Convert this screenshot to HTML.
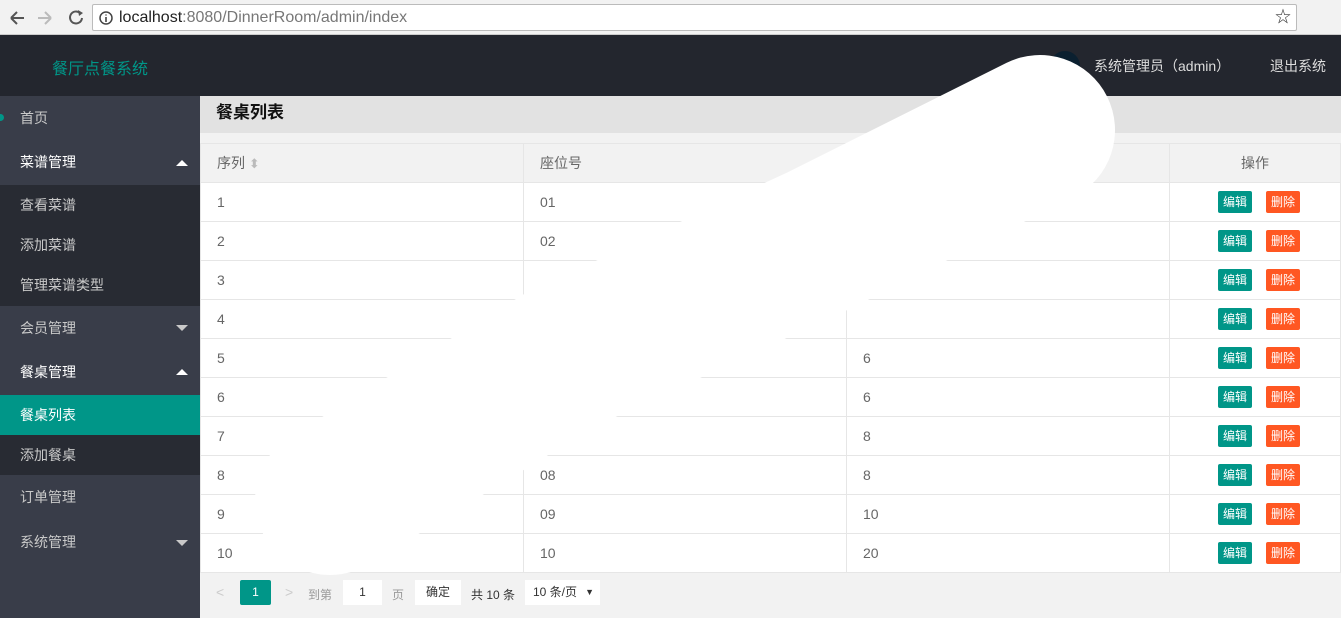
<!DOCTYPE html>
<html><head><meta charset="utf-8"><style>
*{margin:0;padding:0;box-sizing:border-box}
body{width:1341px;height:618px;overflow:hidden;font-family:"Liberation Sans","Noto Sans CJK SC",sans-serif;font-size:14px;background:#f2f2f2;position:relative}
.chrome{position:absolute;left:0;top:0;width:1341px;height:35px;background:#f2f2f2;border-bottom:1px solid #ccc}
.addr{position:absolute;left:92px;top:4px;width:1205px;height:27px;background:#fff;border:1px solid #bbb;border-radius:2px;font-size:16px;line-height:25px;padding-left:26px;color:#222}
.addr span{color:#777}
.hdr{position:absolute;left:0;top:35px;width:1341px;height:61px;background:#23262e}
.side{position:absolute;left:0;top:96px;width:200px;height:522px;background:#393d49}
.it{position:absolute;left:0;width:200px;color:#c9c9c9;padding-left:20px}
.main{position:absolute;left:200px;top:96px;width:1141px;height:522px;background:#f2f2f2}
table{border-collapse:collapse;position:absolute;left:0;top:47px;width:1141px;font-size:14px;color:#666}
td{height:39px;border:1px solid #e6e6e6;padding-left:16px;background:#fff}
th{height:39px;border:1px solid #e6e6e6;padding-left:16px;font-weight:normal;text-align:left;background:#f2f2f2;color:#666}
td.op{text-align:center;padding:0 0 0 8px}
.b{display:inline-block;width:34px;height:22px;line-height:22px;color:#fff;font-size:12px;text-align:center;margin:0 7px;border-radius:2px}
.tri{position:absolute;right:12px;width:0;height:0;border-left:6px solid transparent;border-right:6px solid transparent}
</style></head><body>
<div class="chrome">
<svg style="position:absolute;left:8px;top:8px" width="80" height="20"><path d="M3 10h13M3 10l6-6M3 10l6 6" stroke="#555" stroke-width="2" fill="none"/><path d="M30 10h13M43 10l-6-6M43 10l-6 6" stroke="#bbb" stroke-width="2" fill="none"/><path d="M72 5a6 6 0 1 0 2 5" stroke="#555" stroke-width="2" fill="none"/><path d="M70 2l5 3-4 3z" fill="#555"/></svg>
<div class="addr"><svg style="position:absolute;left:6px;top:6px" width="14" height="14"><circle cx="7" cy="7" r="6" stroke="#444" stroke-width="1.5" fill="none"/><path d="M7 6v5M7 3.5v1" stroke="#444" stroke-width="1.6"/></svg>localhost<span>:8080/DinnerRoom/admin/index</span><span style="position:absolute;right:5px;top:0;color:#333">☆</span></div>
</div>
<div class="hdr">
<div style="position:absolute;left:52px;top:20px;color:#009688;font-size:16px">餐厅点餐系统</div>
<div style="position:absolute;left:1050px;top:16px;width:30px;height:30px;border-radius:50%;background:#0b2030"></div>
<div style="position:absolute;left:1094px;top:21px;color:#ddd">系统管理员（admin）</div>
<div style="position:absolute;left:1270px;top:21px;color:#ddd">退出系统</div>
</div>
<div class="side">
<div style="position:absolute;left:-3px;top:18px;width:7px;height:7px;border-radius:50%;background:#009688"></div>
<div class="it" style="top:0;height:44px;line-height:44px">首页</div>
<div class="it" style="top:44px;height:45px;line-height:45px;color:#fff">菜谱管理<span class="tri" style="top:20px;border-bottom:6px solid #fff"></span></div>
<div style="position:absolute;top:89px;left:0;width:200px;height:121px;background:#282b33"></div>
<div class="it" style="top:89px;height:40px;line-height:40px">查看菜谱</div>
<div class="it" style="top:129px;height:40px;line-height:40px">添加菜谱</div>
<div class="it" style="top:169px;height:40px;line-height:40px">管理菜谱类型</div>
<div class="it" style="top:210px;height:44px;line-height:44px">会员管理<span class="tri" style="top:19px;border-top:6px solid #c9c9c9"></span></div>
<div class="it" style="top:254px;height:45px;line-height:45px;color:#fff">餐桌管理<span class="tri" style="top:19px;border-bottom:6px solid #fff"></span></div>
<div class="it" style="top:299px;height:40px;line-height:40px;background:#009688;color:#fff">餐桌列表</div>
<div class="it" style="top:339px;height:40px;line-height:40px;background:#282b33">添加餐桌</div>
<div class="it" style="top:379px;height:44px;line-height:44px">订单管理</div>
<div class="it" style="top:424px;height:45px;line-height:45px">系统管理<span class="tri" style="top:20px;border-top:6px solid #c9c9c9"></span></div>
</div>
<div class="main">
<div style="position:absolute;left:0;top:0;width:1141px;height:37px;background:#e2e2e2;font-size:17px;font-weight:bold;color:#111;line-height:34px;padding-left:16px">餐桌列表</div>
<table>
<tr><th style="width:323px">序列 <span style="color:#bbb;font-size:13px">⬍</span></th><th style="width:323px">座位号</th><th style="width:323px"></th><th style="text-align:center;padding:0">操作</th></tr>
<tr><td>1</td><td>01</td><td></td><td class="op"><span class="b" style="background:#009688">编辑</span><span class="b" style="background:#ff5722">删除</span></td></tr>
<tr><td>2</td><td>02</td><td></td><td class="op"><span class="b" style="background:#009688">编辑</span><span class="b" style="background:#ff5722">删除</span></td></tr>
<tr><td>3</td><td></td><td></td><td class="op"><span class="b" style="background:#009688">编辑</span><span class="b" style="background:#ff5722">删除</span></td></tr>
<tr><td>4</td><td></td><td></td><td class="op"><span class="b" style="background:#009688">编辑</span><span class="b" style="background:#ff5722">删除</span></td></tr>
<tr><td>5</td><td></td><td>6</td><td class="op"><span class="b" style="background:#009688">编辑</span><span class="b" style="background:#ff5722">删除</span></td></tr>
<tr><td>6</td><td></td><td>6</td><td class="op"><span class="b" style="background:#009688">编辑</span><span class="b" style="background:#ff5722">删除</span></td></tr>
<tr><td>7</td><td></td><td>8</td><td class="op"><span class="b" style="background:#009688">编辑</span><span class="b" style="background:#ff5722">删除</span></td></tr>
<tr><td>8</td><td>08</td><td>8</td><td class="op"><span class="b" style="background:#009688">编辑</span><span class="b" style="background:#ff5722">删除</span></td></tr>
<tr><td>9</td><td>09</td><td>10</td><td class="op"><span class="b" style="background:#009688">编辑</span><span class="b" style="background:#ff5722">删除</span></td></tr>
<tr><td>10</td><td>10</td><td>20</td><td class="op"><span class="b" style="background:#009688">编辑</span><span class="b" style="background:#ff5722">删除</span></td></tr>
</table>
<div style="position:absolute;left:0;top:476px;width:1141px;height:38px;font-size:12px;color:#999">
<span style="position:absolute;left:16px;top:12px;color:#ccc;font-size:14px">&lt;</span>
<span style="position:absolute;left:40px;top:8px;width:31px;height:25px;background:#009688;color:#fff;text-align:center;line-height:25px;border-radius:2px">1</span>
<span style="position:absolute;left:85px;top:12px;color:#ccc;font-size:14px">&gt;</span>
<span style="position:absolute;left:108px;top:14px">到第</span>
<span style="position:absolute;left:143px;top:8px;width:39px;height:25px;background:#fff;color:#333;text-align:center;line-height:25px">1</span>
<span style="position:absolute;left:192px;top:14px">页</span>
<span style="position:absolute;left:215px;top:8px;width:46px;height:25px;background:#fff;color:#333;text-align:center;line-height:25px">确定</span>
<span style="position:absolute;left:271px;top:14px;color:#333">共 10 条</span>
<span style="position:absolute;left:325px;top:8px;width:75px;height:25px;background:#fff;color:#333;line-height:25px;padding-left:8px">10 条/页 <span style="position:absolute;right:6px;font-size:9px">▼</span></span>
</div>
</div>
<svg style="position:absolute;left:0;top:0" width="1341" height="618"><polyline points="1040,130 820,240 560,360 330,500" stroke="#fff" stroke-width="150" stroke-linecap="round" stroke-linejoin="round" fill="none"/><circle cx="1040" cy="130" r="62" fill="#fff"/></svg>
</body></html>
